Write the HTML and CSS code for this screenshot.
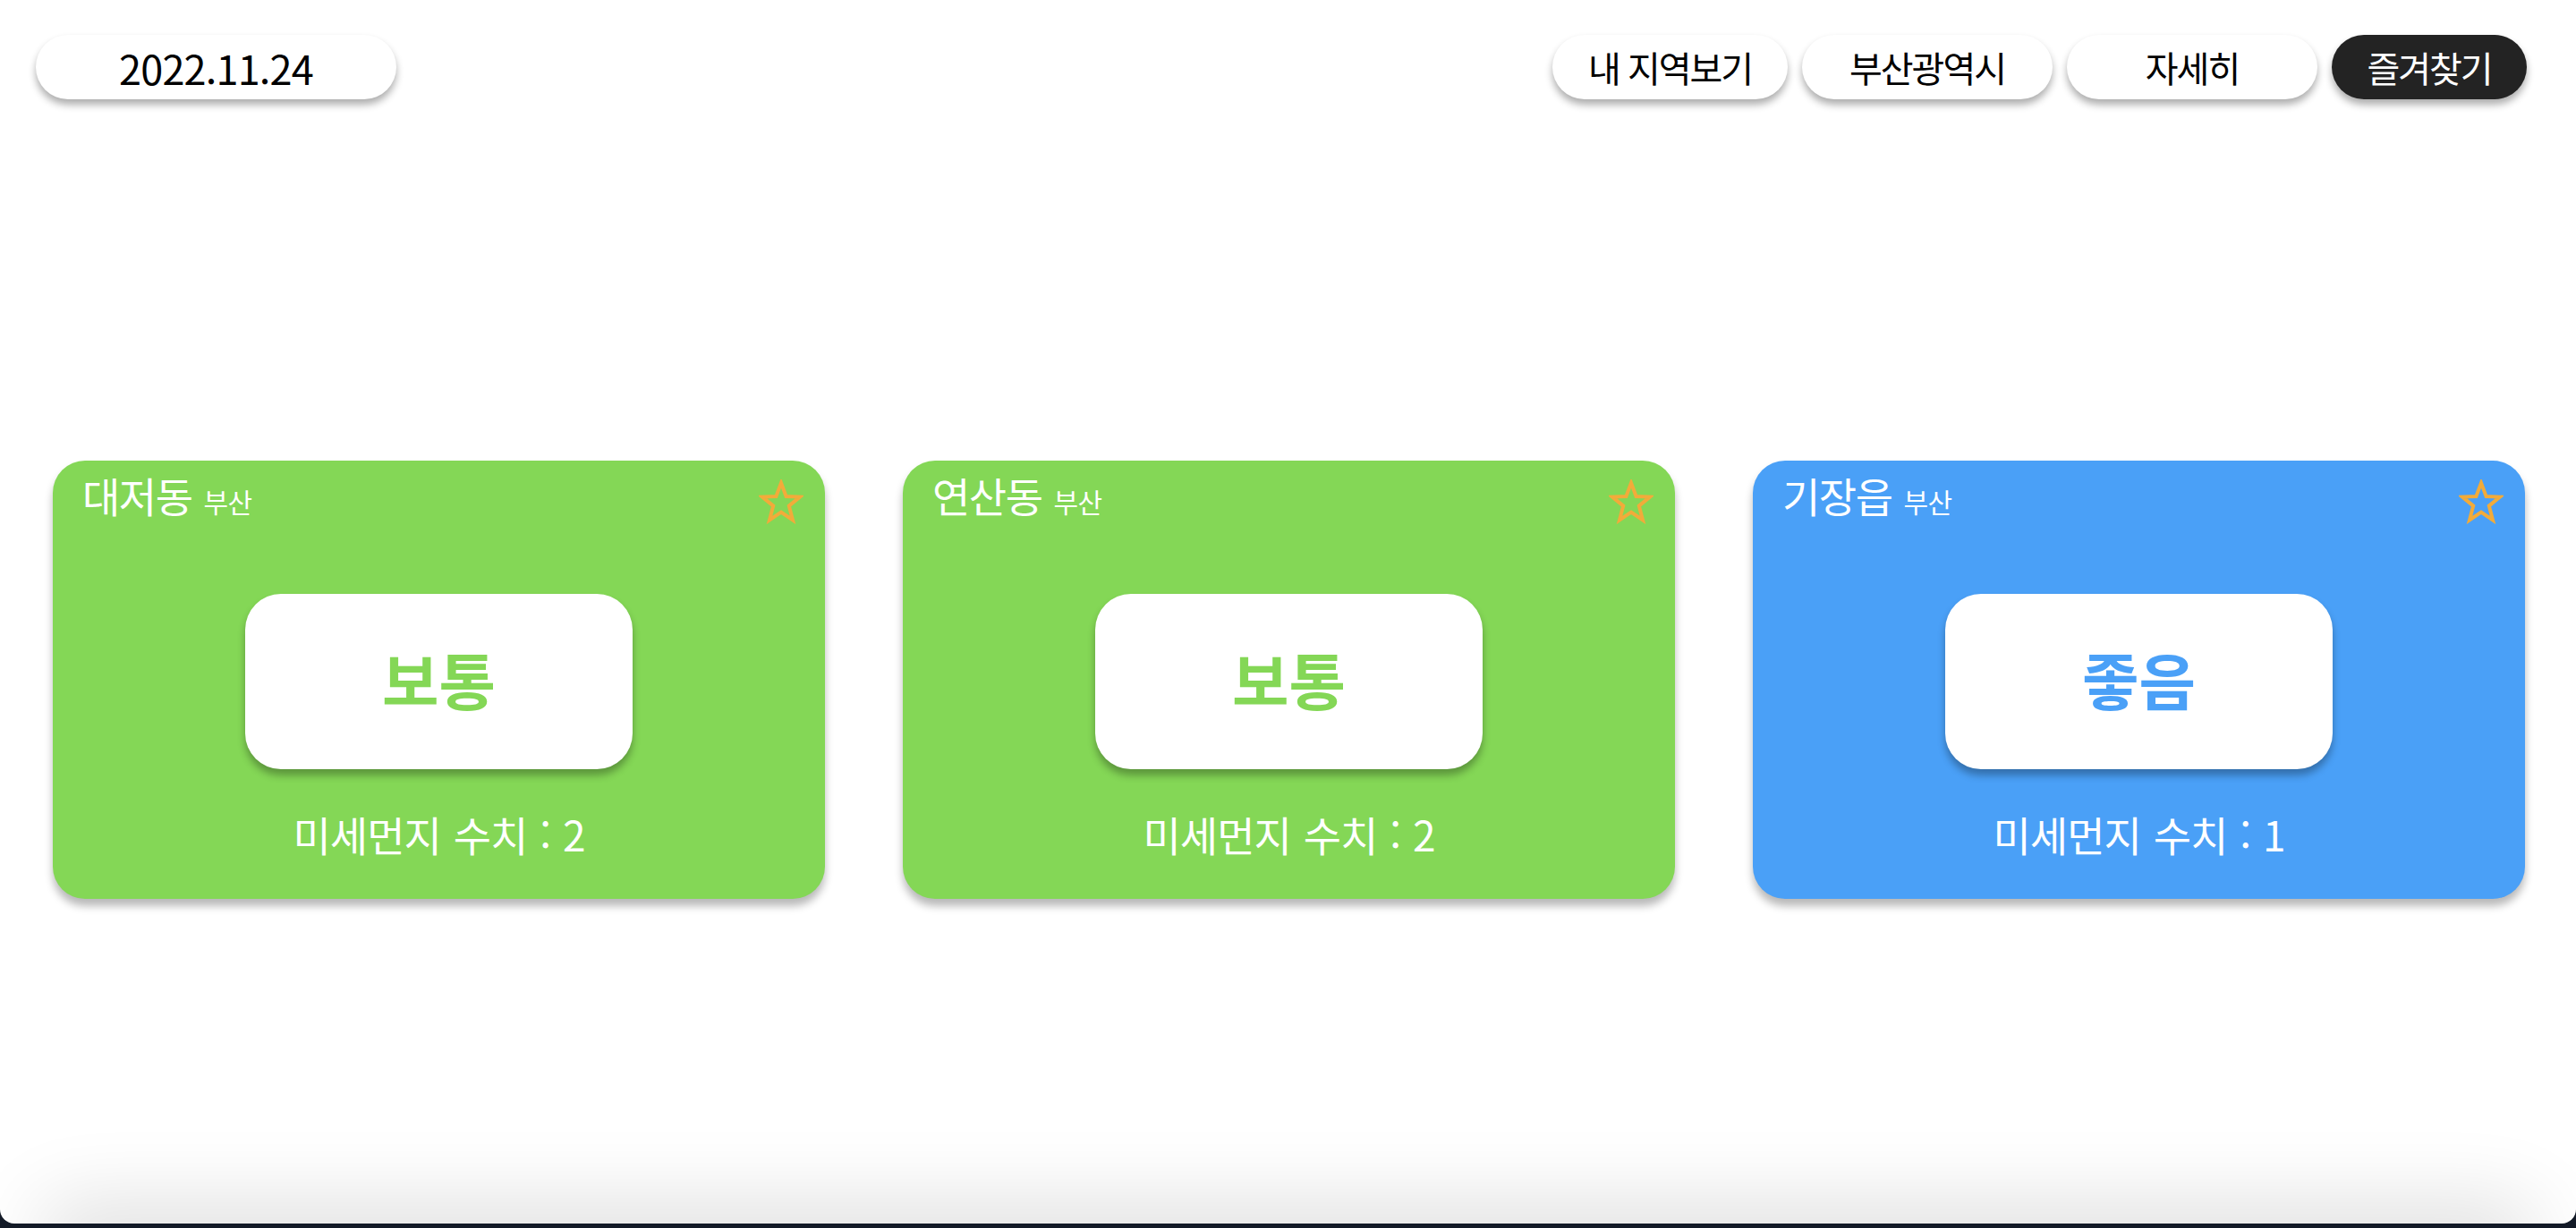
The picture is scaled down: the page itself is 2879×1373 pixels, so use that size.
FILE: index.html
```html
<!DOCTYPE html>
<html lang="ko">
<head>
<meta charset="utf-8">
<title>미세먼지</title>
<link rel="stylesheet" href="styles.css">
</head>
<body>
<div class="window">
  <header class="topbar">
    <div class="pill date">2022.11.24</div>
    <nav class="menu">
      <button class="pill btn btn-a">내 지역보기</button>
      <button class="pill btn btn-wide">부산광역시</button>
      <button class="pill btn btn-wide">자세히</button>
      <button class="pill btn btn-dark">즐겨찾기</button>
    </nav>
  </header>
  <main class="cards">
    <section class="card green">
      <div class="card-head">
        <div class="title"><span class="dong">대저동</span><span class="city">부산</span></div>
        <svg class="star" viewBox="0 0 50 50" width="50" height="50"><polygon points="25,4 30.6,19 46,19.6 33.8,29.6 38,45.5 25,36.6 12,45.5 16.2,29.6 4,19.6 19.4,19" fill="none" stroke="#f2ab3a" stroke-width="4" stroke-linejoin="miter"/></svg>
      </div>
      <div class="badge">보통</div>
      <p class="value">미세먼지 수치 : 2</p>
    </section>
    <section class="card green">
      <div class="card-head">
        <div class="title"><span class="dong">연산동</span><span class="city">부산</span></div>
        <svg class="star" viewBox="0 0 50 50" width="50" height="50"><polygon points="25,4 30.6,19 46,19.6 33.8,29.6 38,45.5 25,36.6 12,45.5 16.2,29.6 4,19.6 19.4,19" fill="none" stroke="#f2ab3a" stroke-width="4" stroke-linejoin="miter"/></svg>
      </div>
      <div class="badge">보통</div>
      <p class="value">미세먼지 수치 : 2</p>
    </section>
    <section class="card blue">
      <div class="card-head">
        <div class="title"><span class="dong">기장읍</span><span class="city">부산</span></div>
        <svg class="star" viewBox="0 0 50 50" width="50" height="50"><polygon points="25,4 30.6,19 46,19.6 33.8,29.6 38,45.5 25,36.6 12,45.5 16.2,29.6 4,19.6 19.4,19" fill="none" stroke="#f2ab3a" stroke-width="4" stroke-linejoin="miter"/></svg>
      </div>
      <div class="badge">좋음</div>
      <p class="value">미세먼지 수치 : 1</p>
    </section>
  </main>
  <div class="bottom-shade"></div>
</div>
</body>
</html>
```
FILE: styles.css
```css
* { box-sizing: border-box; }
html, body { margin: 0; padding: 0; }
body {
  background: #131a27;
  font-family: "Noto Sans CJK KR", "Noto Sans", sans-serif;
  height: 1373px;
  overflow: hidden;
}
.window {
  position: relative;
  height: 1368px;
  background: #ffffff;
  border-radius: 0 0 16px 16px;
  overflow: hidden;
}
.topbar {
  display: flex;
  justify-content: space-between;
  align-items: flex-start;
  padding: 39px 55px 0 40px;
}
.pill {
  height: 72px;
  border-radius: 36px;
  background: #fff;
  box-shadow: 0 6px 8px rgba(0,0,0,0.32);
  display: flex;
  align-items: center;
  justify-content: center;
  color: #000;
}
.date {
  width: 403px;
  font-size: 45px;
  letter-spacing: -0.8px;
}
.menu {
  display: flex;
  gap: 16px;
}
.btn {
  border: none;
  font-family: inherit;
  font-size: 40px;
  padding: 0;
  letter-spacing: -2px;
}
.btn-a { width: 263px; }
.btn-wide { width: 280px; }
.btn-dark { width: 218px; background: #232323; color: #fff; }
.cards {
  display: grid;
  grid-template-columns: repeat(3, 1fr);
  column-gap: 87px;
  padding: 0 57px 0 59px;
  margin-top: 404px;
}
.card {
  height: 490px;
  border-radius: 36px;
  box-shadow: 0 8px 10px rgba(0,0,0,0.28);
  padding: 12px 24px 0 33px;
  display: flex;
  flex-direction: column;
  align-items: center;
  color: #fff;
}
.green { background: #84d756; }
.blue { background: #4aa0f7; }
.card-head {
  width: 100%;
  height: 64px;
  display: flex;
  justify-content: space-between;
  align-items: flex-start;
}
.title {
  display: flex;
  align-items: baseline;
  gap: 13px;
  line-height: 52px;
}
.dong { font-size: 46px; letter-spacing: -1.5px; }
.city { font-size: 30px; letter-spacing: -0.5px; }
.star { margin-top: 9px; }
.badge {
  margin-top: 73px;
  margin-right: 9px;
  width: 433px;
  height: 196px;
  background: #fff;
  border-radius: 40px;
  box-shadow: 0 7px 8px rgba(0,0,0,0.3);
  display: flex;
  align-items: center;
  justify-content: center;
  font-size: 69px;
  font-weight: 700;
  padding-bottom: 6px;
}
.green .badge { color: #84d756; }
.blue .badge { color: #4aa0f7; }
.value {
  margin: 43px 9px 0 0;
  font-size: 46px;
  line-height: 58px;
  letter-spacing: -1px;
  word-spacing: 2px;
}
.bottom-shade {
  position: absolute;
  left: 70px;
  right: 70px;
  top: 1368px;
  height: 40px;
  box-shadow: 0 0 90px 20px rgba(0,0,0,0.14);
}
```
